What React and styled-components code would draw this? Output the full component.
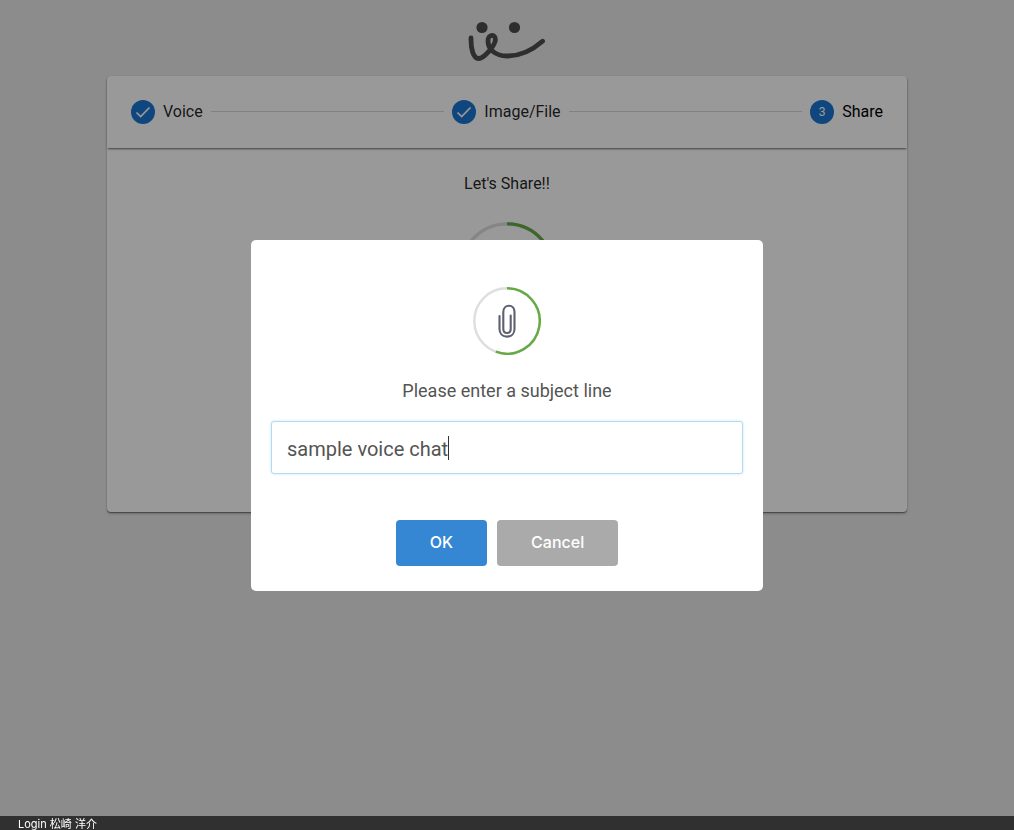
import React, { useLayoutEffect, useRef, useState } from 'react'
import styled, { createGlobalStyle } from 'styled-components'

const steps = [
  { label: 'Voice', done: true },
  { label: 'Image/File', done: true },
  { label: 'Share', done: false, active: true },
]

function Logo() {
  return (
    <svg width="80" height="42" viewBox="0 0 80 42" fill="none" role="img" aria-label="Logo">
      <circle cx="15" cy="7.5" r="5.6" fill="#4d4d4d" />
      <circle cx="47.5" cy="7.5" r="5.6" fill="#4d4d4d" />
      <path
        d="M4 18 C3.800 28 6 38.500 11.500 38.500 C17 38.500 27.500 26 28.300 20.500 C29.200 13.500 21 13.500 21 21 C21 29 28 36 40 36 C54 36 66 29.500 75.500 21.200"
        stroke="#4d4d4d"
        strokeWidth="4.800"
        strokeLinecap="round"
        strokeLinejoin="round"
      />
    </svg>
  )
}

function ProgressClip({ size }) {
  return (
    <svg width={size} height={size} viewBox="0 0 68 68" fill="none" aria-hidden="true">
      <circle cx="34" cy="34" r="32.700" stroke="#dedede" strokeWidth="2.400" />
      <path d="M34 1.300 A32.700 32.700 0 1 1 22.800 64.700" stroke="#66aa44" strokeWidth="2.400" />
      <path
        d="M26.500 29 V42 C26.500 46.500 29.600 49.600 34 49.600 C38.400 49.600 41.500 46.500 41.500 42 V25 C41.500 21.300 39.200 18.800 36 18.800 C32.800 18.800 30.300 21.300 30.300 25 V42 C30.300 44.500 31.800 46 34 46 C36.200 46 37.700 44.500 37.700 42 V28.500"
        stroke="#5d6070"
        strokeWidth="2.100"
        strokeLinecap="round"
      />
    </svg>
  )
}

function SubjectField({ value, onChange }) {
  const textRef = useRef(null)
  const [caret, setCaret] = useState(0)

  useLayoutEffect(() => {
    setCaret(textRef.current.offsetWidth)
  }, [value])

  return (
    <Field>
      <Input id="subject" type="text" value={value} onChange={onChange} />
      <Measure ref={textRef} aria-hidden="true">{value}</Measure>
      <Caret style={{ left: 16 + caret }} />
    </Field>
  )
}

function App() {
  const [subject, setSubject] = useState('sample voice chat')

  return (
    <>
      <GlobalStyle />
      <Page>
        <Header><Logo /></Header>
        <Card>
          <Stepper>
            {steps.map((step, i) => (
              <React.Fragment key={step.label}>
                {i > 0 && <Connector />}
                <Step $active={step.active}>
                  <StepIcon>
                    {step.done ? (
                      <svg width="24" height="24" viewBox="0 0 24 24" fill="none" aria-hidden="true">
                        <path d="M5.500 12.500 L9.700 16.500 L18.500 7.500" stroke="#fff" strokeWidth="1.700" />
                      </svg>
                    ) : i + 1}
                  </StepIcon>
                  {step.label}
                </Step>
              </React.Fragment>
            ))}
          </Stepper>
          <Content>
            <Heading>Let's Share!!</Heading>
            <ProgressClip size={96} />
          </Content>
        </Card>
      </Page>
      <Overlay>
        <Modal role="dialog" aria-modal="true">
          <ProgressClip size={68} />
          <Label htmlFor="subject">Please enter a subject line</Label>
          <SubjectField value={subject} onChange={(e) => setSubject(e.target.value)} />
          <Actions>
            <Button $primary type="button">OK</Button>
            <Button type="button">Cancel</Button>
          </Actions>
        </Modal>
      </Overlay>
      <Footer>Login 松崎 洋介</Footer>
    </>
  )
}

export default App

const GlobalStyle = createGlobalStyle`
    * {
        box-sizing: border-box;
    }
    body {
        margin: 0;
        background: #eaeaea;
        font-family: Roboto, 'Noto Sans CJK JP', sans-serif;
    }
    svg {
        display: block;
        flex-shrink: 0;
    }
`
const Page = styled.div`
    min-height: 100vh;
    padding: 0 16px 32px;
`
const Header = styled.header`
    height: 76px;
    padding-top: 20px;
    display: flex;
    justify-content: center;
`
const Card = styled.main`
    max-width: 800px;
    margin: 0 auto;
    background: #fff;
    border-radius: 4px;
    box-shadow: 0 1px 1px 0 rgba(0,0,0,0.4), 0 2px 3px 0 rgba(0,0,0,0.2);
`
const Stepper = styled.div`
    display: flex;
    align-items: center;
    padding: 24px;
    border-radius: 4px 4px 0 0;
    box-shadow: 0 2px 2px -1px rgba(0,0,0,0.5), 0 1px 3px 0 rgba(0,0,0,0.12);
`
const Step = styled.div`
    display: flex;
    align-items: center;
    gap: 8px;
    font-size: 16px;
    line-height: 24px;
    color: ${({ $active }) => ($active ? '#000' : 'rgba(0,0,0,0.87)')};
`
const StepIcon = styled.span`
    width: 24px;
    height: 24px;
    border-radius: 50%;
    background: #1976d2;
    color: #fff;
    display: flex;
    align-items: center;
    justify-content: center;
    font-size: 12px;
`
const Connector = styled.span`
    flex: 1;
    margin: 0 8px;
    border-top: 1px solid #d8d8d8;
    padding-bottom: 1px;
`
const Content = styled.section`
    min-height: 364px;
    padding: 24px;
    display: flex;
    flex-direction: column;
    align-items: center;
    gap: 26px;
`
const Heading = styled.h1`
    margin: 0;
    font-size: 16px;
    font-weight: 400;
    line-height: 24px;
    color: rgba(0,0,0,0.87);
`
const Overlay = styled.div`
    position: fixed;
    inset: 0;
    padding: 10px;
    display: flex;
    align-items: center;
    justify-content: center;
    background: rgba(0,0,0,0.4);
`
const Modal = styled.div`
    width: 100%;
    max-width: 512px;
    padding: 47px 20px 25px;
    display: flex;
    flex-direction: column;
    align-items: center;
    background: #fff;
    border-radius: 5px;
`
const Label = styled.label`
    margin: 24px 0 18px;
    font-size: 18px;
    line-height: 24px;
    color: #545454;
`
const Field = styled.div`
    position: relative;
    width: 100%;
    font-size: 20px;
    color: #545454;
`
const Input = styled.input`
    display: block;
    width: 100%;
    height: 53px;
    padding: 4px 15px 0;
    border: 1px solid #b4dbed;
    border-radius: 3px;
    box-shadow: 0 0 3px #c4e6f5;
    outline: none;
    background: #fff;
    font: inherit;
    color: inherit;
    caret-color: transparent;
`
const Measure = styled.span`
    position: absolute;
    left: 16px;
    top: 0;
    visibility: hidden;
    white-space: pre;
`
const Caret = styled.span`
    position: absolute;
    top: 15px;
    width: 1px;
    height: 24px;
    background: #333;
`
const Actions = styled.div`
    margin-top: 46px;
    display: flex;
    gap: 10px;
`
const Button = styled.button`
    height: 46px;
    padding: 0 34px 2px;
    border: 0;
    border-radius: 4px;
    background: ${({ $primary }) => ($primary ? '#3587d4' : '#aaa')};
    color: #fff;
    font-family: Inter, sans-serif;
    font-size: 16px;
    font-weight: 500;
`
const Footer = styled.footer`
    position: fixed;
    left: 0;
    right: 0;
    bottom: 0;
    height: 14px;
    padding-left: 18px;
    background: #303030;
    color: #fff;
    font-family: Inter, 'Noto Sans CJK JP', sans-serif;
    font-size: 11px;
    line-height: 16px;
`
